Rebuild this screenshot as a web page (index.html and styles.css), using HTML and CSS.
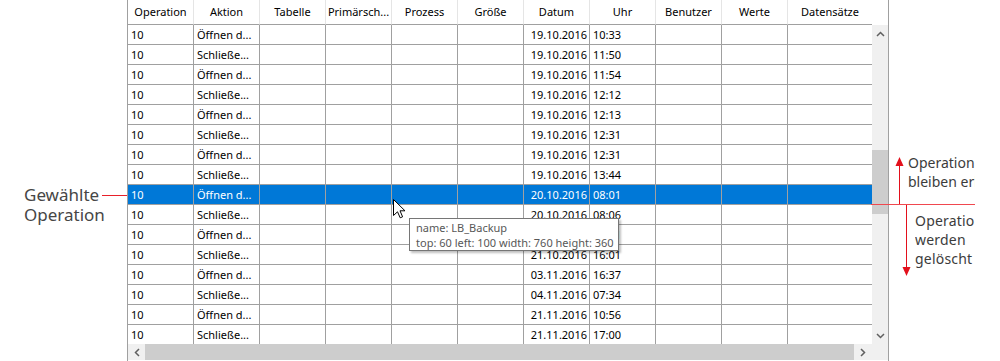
FILE: index.html
```html
<!DOCTYPE html>
<html lang="de">
<head>
  <meta charset="UTF-8" />
  <title>Protokoll</title>
  <link rel="stylesheet" href="styles.css">
</head>
<body>
  <div class="stage">
    <div class="note-left">
      <div class="first">Gewählte<span class="connector"></span></div>
      <div class="second">Operation</div>
    </div>

    <div class="listview">
      <div class="header">
        <div class="hcell">Operation</div>
        <div class="hcell">Aktion</div>
        <div class="hcell">Tabelle</div>
        <div class="hcell">Primärsch...</div>
        <div class="hcell">Prozess</div>
        <div class="hcell">Größe</div>
        <div class="hcell">Datum</div>
        <div class="hcell">Uhr</div>
        <div class="hcell">Benutzer</div>
        <div class="hcell">Werte</div>
        <div class="hcell">Datensätze</div>
      </div>
      <div class="rows" id="rows"></div>
      <div class="vscroll">
        <div class="sb-btn"><svg width="9" height="6"><path d="M1 5 L4.5 1.5 L8 5" /></svg></div>
        <div class="vthumb"></div>
        <div class="sb-fill"></div>
        <div class="sb-btn"><svg width="9" height="6"><path d="M1 1 L4.5 4.5 L8 1" /></svg></div>
      </div>
      <div class="hscroll">
        <div class="sb-btn left"><svg width="6" height="9"><path d="M5 1 L1.5 4.5 L5 8" /></svg></div>
        <div class="hthumb"></div>
        <div class="sb-btn right"><svg width="6" height="9"><path d="M1 1 L4.5 4.5 L1 8" /></svg></div>
      </div>
      <div class="corner"></div>
    </div>

    <div class="note-right">
      <div class="keep">
        <svg width="19" height="51"><line x1="10.5" y1="51" x2="10.5" y2="12" /><polygon points="6.5,13 10.5,4 14.5,13" /></svg>
        <div class="note-text">Operation<br>bleiben erhalten</div>
      </div>
      <div class="divider"></div>
      <div class="drop">
        <svg width="26" height="73"><line x1="17.5" y1="0" x2="17.5" y2="63" /><polygon points="13.5,62 17.5,71 21.5,62" /></svg>
        <div class="note-text lower">Operationen<br>werden<br>gelöscht</div>
      </div>
    </div>

    <div class="tooltip">
      name: LB_Backup<br>
      top: 60 left: 100 width: 760 height: 360
    </div>
    <svg class="cursor" width="13" height="20"><path d="M0.5 0.5 L0.5 16.5 L4.5 12.8 L7.2 18.8 L9.6 17.8 L7 11.8 L12 11.8 Z" /></svg>
  </div>

  <script>
    // Log entries: action, date, time
    const entries = [
      ["Öffnen d...", "19.10.2016", "10:33"],
      ["Schließe...", "19.10.2016", "11:50"],
      ["Öffnen d...", "19.10.2016", "11:54"],
      ["Schließe...", "19.10.2016", "12:12"],
      ["Öffnen d...", "19.10.2016", "12:13"],
      ["Schließe...", "19.10.2016", "12:31"],
      ["Öffnen d...", "19.10.2016", "12:31"],
      ["Schließe...", "19.10.2016", "13:44"],
      ["Öffnen d...", "20.10.2016", "08:01"],
      ["Schließe...", "20.10.2016", "08:06"],
      ["Öffnen d...", "21.10.2016", "11:11"],
      ["Schließe...", "21.10.2016", "16:01"],
      ["Öffnen d...", "03.11.2016", "16:37"],
      ["Schließe...", "04.11.2016", "07:34"],
      ["Öffnen d...", "21.11.2016", "10:56"],
      ["Schließe...", "21.11.2016", "17:00"]
    ];
    const selected = 8;

    const rowsEl = document.getElementById("rows");
    entries.forEach((e, i) => {
      const row = document.createElement("div");
      row.className = "row" + (i === selected ? " selected" : "");
      const cells = ["10", e[0], "", "", "", "", e[1], e[2], "", "", ""];
      cells.forEach((text, c) => {
        const cell = document.createElement("div");
        cell.className = c === 6 ? "cell date" : "cell";
        cell.textContent = text;
        row.appendChild(cell);
      });
      rowsEl.appendChild(row);
    });
  </script>
</body>
</html>
```

FILE: styles.css
```css
body {
  margin: 0;
  font-family: "Noto Sans", sans-serif;
  background: #fff;
}

.stage {
  position: relative;
  display: flex;
  width: 1000px;
  height: 361px;
  overflow: hidden;
}

/* left annotation */
.note-left {
  width: 127px;
  padding-top: 185px;
  box-sizing: border-box;
  font-size: 17px;
  line-height: 20px;
  color: #464646;
}

.note-left .first {
  display: flex;
  align-items: center;
  padding-left: 24px;
}

.note-left .second {
  padding-left: 24px;
}

.connector {
  flex: 1;
  height: 1px;
  margin-left: 3px;
  background: #e8202a;
}

/* list view */
.listview {
  width: 762px;
  height: 361px;
  box-sizing: border-box;
  border-left: 1px solid #a0a0a0;
  border-right: 1px solid #a0a0a0;
  display: grid;
  grid-template-columns: 744px 16px;
  grid-template-rows: 25px 319px 17px;
  font-size: 11px;
  color: #000;
}

.header {
  grid-column: 1 / 3;
  display: grid;
  grid-template-columns: repeat(10, 66px) 1fr 16px;
}

.hcell {
  height: 25px;
  line-height: 24px;
  text-align: center;
  white-space: nowrap;
  box-sizing: border-box;
  border-right: 1px solid #e5e5e5;
  border-bottom: 1px solid #a0a0a0;
}

.hcell:last-child {
  border-right: none;
}

.rows {
  grid-column: 1;
  grid-row: 2;
  overflow: hidden;
}

.row {
  display: grid;
  grid-template-columns: repeat(10, 66px) 1fr;
  height: 20px;
  box-sizing: border-box;
  border-bottom: 1px solid #a0a0a0;
}

.row.selected {
  background: #0078d7;
  color: #fff;
}

.cell {
  padding: 0 2px 0 3px;
  line-height: 19px;
  white-space: nowrap;
  overflow: hidden;
  border-right: 1px solid #a0a0a0;
}

.cell:last-child {
  border-right: none;
}

.cell.date {
  text-align: right;
}

/* scrollbars */
.vscroll {
  grid-column: 2;
  grid-row: 2;
  display: flex;
  flex-direction: column;
  background: #f0f0f0;
}

.sb-btn {
  height: 17px;
  display: flex;
  align-items: center;
  justify-content: center;
  flex-shrink: 0;
}

.sb-btn path {
  fill: none;
  stroke: #606060;
  stroke-width: 1.5;
}

.vthumb {
  height: 64px;
  margin-top: 108px;
  background: #cdcdcd;
}

.sb-fill {
  flex: 1;
}

.hscroll {
  grid-column: 1;
  grid-row: 3;
  display: flex;
  height: 16px;
  background: #f0f0f0;
}

.hscroll .sb-btn {
  height: 16px;
}

.hscroll .left {
  width: 17px;
}

.hscroll .right {
  width: 18px;
}

.hthumb {
  flex: 1;
  background: #cdcdcd;
}

.corner {
  grid-column: 2;
  grid-row: 3;
  height: 16px;
  background: #f0f0f0;
}

/* right annotation */
.note-right {
  width: 86px;
  padding-top: 153px;
  font-size: 14px;
  line-height: 19px;
  color: #3c3c3c;
}

.keep,
.drop {
  display: flex;
}

.keep {
  height: 51px;
}

.drop {
  height: 73px;
}

.note-right svg {
  flex-shrink: 0;
}

.note-right line {
  stroke: #e3101c;
  stroke-width: 1;
}

.note-right polygon {
  fill: #e3101c;
}

.note-text {
  flex: 1;
  overflow: hidden;
  white-space: nowrap;
}

.note-text.lower {
  padding-top: 6px;
  letter-spacing: 0.2px;
}

.divider {
  height: 1px;
  margin-left: -18px;
  background: #f0484f;
}

/* overlays */
.tooltip {
  position: absolute;
  left: 409px;
  top: 218px;
  width: 210px;
  height: 33px;
  box-sizing: border-box;
  padding: 1px 0 0 6px;
  border: 1px solid #767676;
  background: #fff;
  box-shadow: 2px 2px 2px rgba(0, 0, 0, 0.25);
  font-size: 11px;
  line-height: 15px;
  color: #575757;
  white-space: nowrap;
}

.cursor {
  position: absolute;
  left: 393px;
  top: 199px;
}

.cursor path {
  fill: #fff;
  stroke: #000;
  stroke-width: 1;
}
```
